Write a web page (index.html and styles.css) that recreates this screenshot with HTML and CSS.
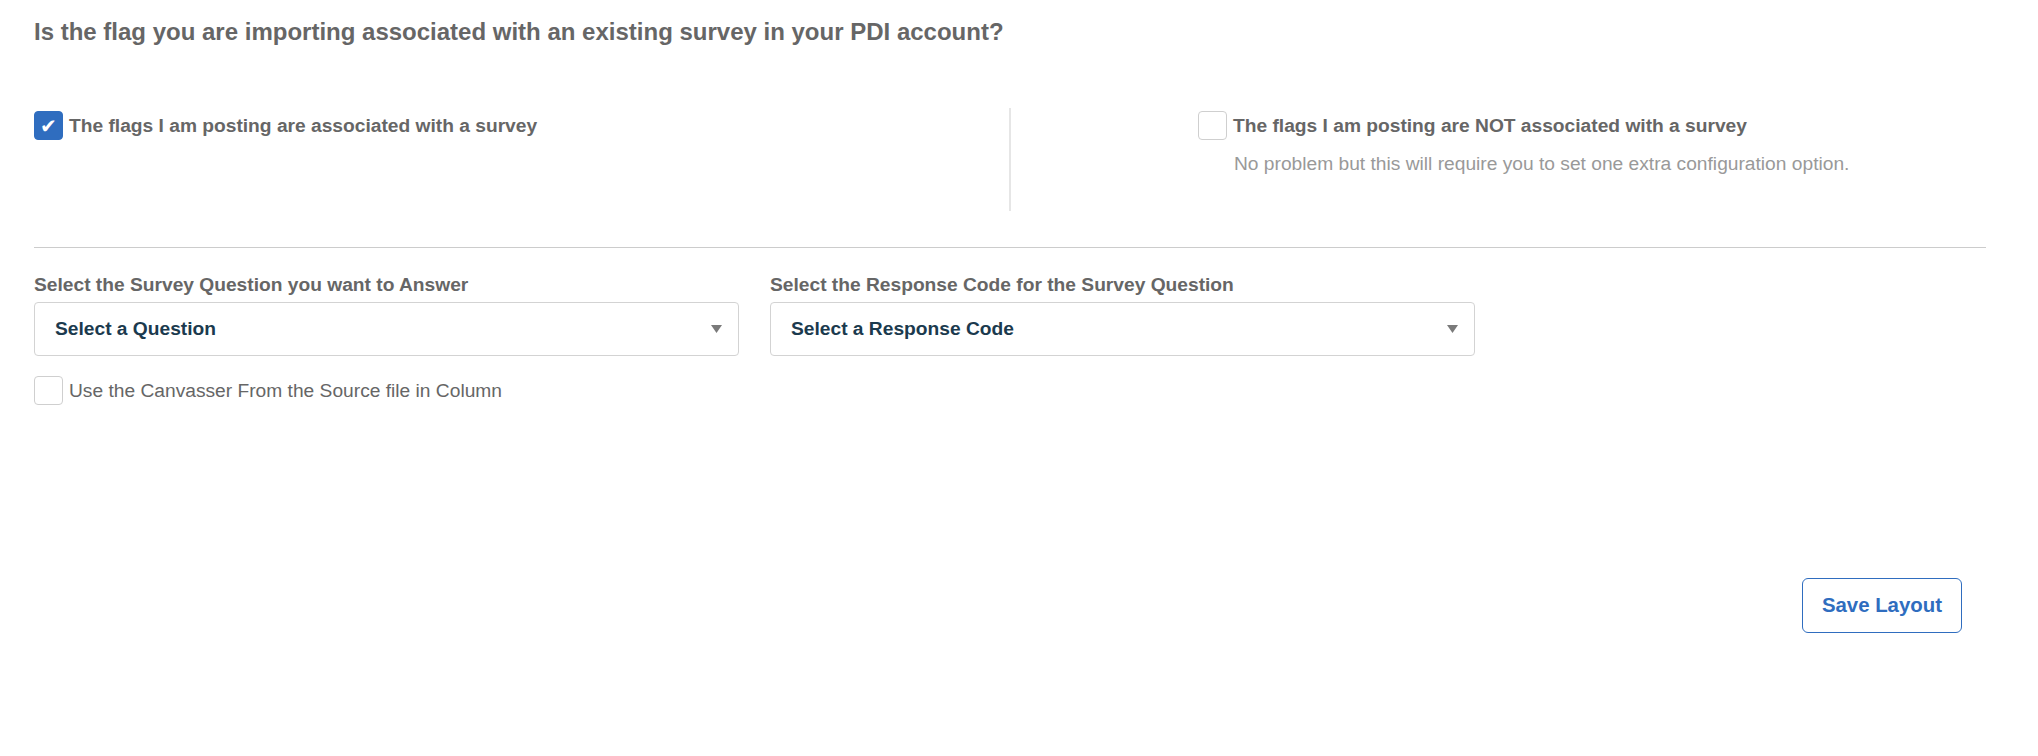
FILE: index.html
```html
<!DOCTYPE html>
<html lang="en">
<head>
    <meta charset="UTF-8">
    <meta name="viewport" content="width=device-width, initial-scale=1.0">
    <title>Survey Flags</title>
    <link rel="stylesheet" href="styles.css">
</head>
<body>

   <div class="page">
    <h1 class="question">Is the flag you are importing associated with an existing survey in your PDI account?</h1>

    <div class="survey-choice">
        <div class="choice-col">
            <label class="check-row">
                <span class="checkbox checked">&#10004;</span>
                <span class="check-label">The flags I am posting are associated with a survey</span>
            </label>
        </div>
        <div class="choice-col right-col">
            <label class="check-row">
                <span class="checkbox"></span>
                <span class="check-label">The flags I am posting are NOT associated with a survey</span>
            </label>
            <p class="hint">No problem but this will require you to set one extra configuration option.</p>
        </div>
    </div>

    <hr class="divider">

    <div class="fields">
        <div class="field">
            <div class="field-label">Select the Survey Question you want to Answer</div>
            <div class="select">
                <span>Select a Question</span>
                <svg class="caret" width="11" height="8" viewBox="0 0 11 8"><polygon points="0,0 11,0 5.5,8" fill="#7a7a7a"/></svg>
            </div>
        </div>
        <div class="field">
            <div class="field-label">Select the Response Code for the Survey Question</div>
            <div class="select">
                <span>Select a Response Code</span>
                <svg class="caret" width="11" height="8" viewBox="0 0 11 8"><polygon points="0,0 11,0 5.5,8" fill="#7a7a7a"/></svg>
            </div>
        </div>
    </div>

    <label class="check-row canvasser">
        <span class="checkbox"></span>
        <span class="plain-label">Use the Canvasser From the Source file in Column</span>
    </label>

    <div class="actions">
        <button class="save-btn">Save Layout</button>
    </div>
   </div>

</body>
</html>
```

FILE: styles.css
```css
*{
    margin: 0;
    padding: 0;
    box-sizing: border-box;
    font-family: "Liberation Sans", Arial, Helvetica, sans-serif;
}
body{
    background: #fff;
    color: #666;
}
.page{
    width: 2038px;
    padding: 18px 52px 0 34px;
}
.question{
    font-size: 24px;
    line-height: 28px;
    font-weight: 700;
    color: #666;
}
.survey-choice{
    display: flex;
    margin-top: 62px;
    height: 103px;
}
.choice-col{
    width: 975px;
    padding-top: 3px;
}
.right-col{
    flex: 1;
    border-left: 2px solid #e6e6e6;
    padding-left: 187px;
}
.check-row{
    display: flex;
    align-items: center;
    gap: 6px;
}
.checkbox{
    width: 29px;
    height: 29px;
    border: 1px solid #cfcfcf;
    border-radius: 4px;
    background: #fff;
    display: flex;
    align-items: center;
    justify-content: center;
    flex-shrink: 0;
}
.checkbox.checked{
    background: #2f6dbf;
    border-color: #2f6dbf;
    color: #fff;
    font-family: "DejaVu Sans", sans-serif;
    font-size: 20px;
    line-height: 1;
    padding-top: 1px;
}
.check-label{
    font-size: 19.2px;
    font-weight: 700;
    color: #666;
}
.hint{
    font-size: 19.2px;
    color: #999;
    margin-top: 13px;
    padding-left: 36px;
}
.divider{
    border: none;
    border-top: 1px solid #cccccc;
    margin-top: 36px;
}
.fields{
    display: flex;
    gap: 31px;
    margin-top: 26px;
}
.field{
    width: 705px;
}
.field-label{
    font-size: 19.2px;
    line-height: 22px;
    font-weight: 700;
    color: #666;
    margin-bottom: 6px;
}
.select{
    height: 54px;
    border: 1px solid #d3d3d3;
    border-radius: 4px;
    display: flex;
    align-items: center;
    justify-content: space-between;
    padding: 0 16px 0 20px;
    font-size: 19.2px;
    font-weight: 700;
    color: #1b3a4e;
}
.canvasser{
    margin-top: 20px;
}
.plain-label{
    font-size: 19.2px;
    color: #666;
}
.actions{
    display: flex;
    justify-content: flex-end;
    margin-top: 173px;
    padding-right: 24px;
}
.save-btn{
    height: 55px;
    padding: 0 19px;
    border: 1px solid #2f6dbf;
    border-radius: 6px;
    background: #fff;
    color: #2f6dbf;
    font-size: 20.4px;
    font-weight: 700;
}
```
